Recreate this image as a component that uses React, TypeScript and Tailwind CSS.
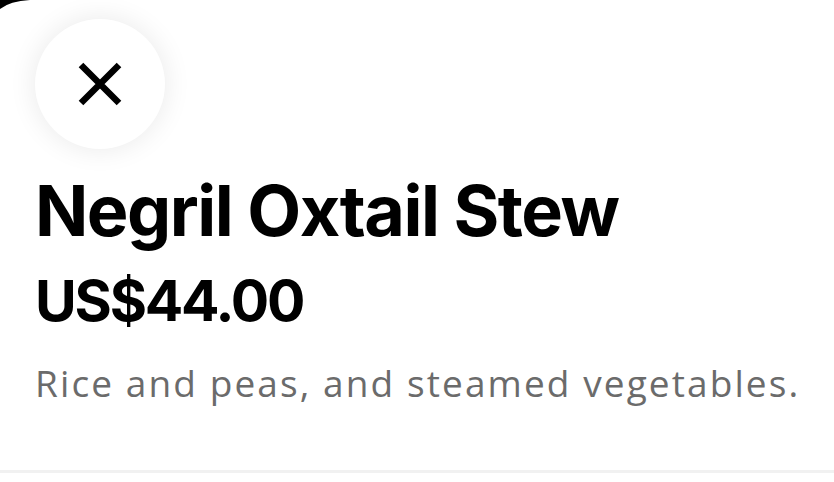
import React from "react";

export default function App() {
  return (
    <div className="relative w-[834px] h-[482px] bg-white overflow-hidden">
      <svg className="absolute left-0 top-0" width="40" height="14" viewBox="0 0 40 14">
        <path d="M0 0 H30 Q10 1 0 9 Z" fill="#000" />
      </svg>
      <div className="flex flex-col pl-[35px] pt-[19px]">
        <button className="w-[130px] h-[130px] rounded-full bg-white flex items-center justify-center shadow-[0_0_28px_rgba(0,0,0,0.09)]">
          <svg width="46" height="46" viewBox="0 0 46 46">
            <path d="M4 4 L42 42 M42 4 L4 42" stroke="#000" strokeWidth="6.5" strokeLinecap="butt" />
          </svg>
        </button>
        <h1
          className="mt-[22px] text-[70px] leading-[80px] font-bold text-black tracking-[-1.5px]"
          style={{ fontFamily: "Inter, sans-serif" }}
        >
          Negril Oxtail Stew
        </h1>
        <div
          className="mt-[18px] text-[57px] leading-[64px] font-bold text-black tracking-[-2.2px]"
          style={{ fontFamily: "Inter, sans-serif" }}
        >
          US$44.00
        </div>
        <p
          className="mt-[26px] text-[37px] leading-[48px] text-[#6b6b6b] tracking-[2.1px]"
          style={{ fontFamily: "'Open Sans', sans-serif" }}
        >
          Rice and peas, and steamed vegetables.
        </p>
      </div>
      <div className="absolute left-0 right-0 top-[470px] h-[3px] bg-[#f1f1f1]" />
    </div>
  );
}
